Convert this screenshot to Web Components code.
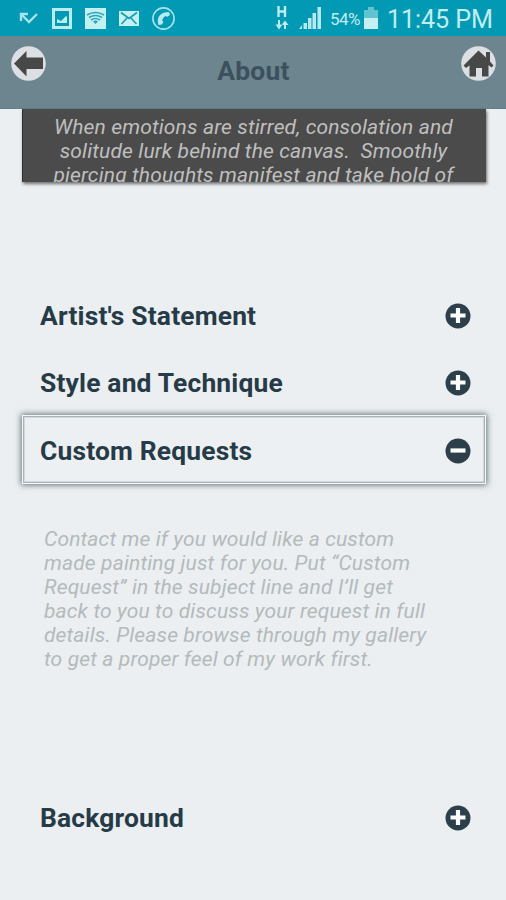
<!DOCTYPE html>
<html lang="en"><head><meta charset="utf-8"><title>About</title>
<style>body{margin:0;background:#ebeff1;font-family:Roboto,"Liberation Sans",sans-serif}</style></head>
<body><about-screen></about-screen>
<script>
const define=(name,html)=>customElements.define(name,class extends HTMLElement{
  constructor(){super();this.attachShadow({mode:'open'}).innerHTML=html;}
});

define('status-bar',`<style>
:host{display:flex;height:36px;box-sizing:border-box;background:#0199b3;color:#c0edf2;align-items:center;justify-content:space-between;padding:0 13px 0 18px}
svg{display:block}.l,.r{display:flex;align-items:center}
.l{gap:13px}.r{gap:7px}
.p{font-size:17px;line-height:36px;letter-spacing:-.5px;margin:0 -3px 0 2px;padding-top:2px}
.t{font-size:25.200px;line-height:36px;letter-spacing:-.1px;padding-top:3px;margin-left:2px}
</style>
<div class="l">
<svg width="21" height="22" viewBox="-1 0 21 22" fill="none" stroke="#a5e4ec" stroke-width="2.400"><path d="M2 14V7h7M2 7l8 8 8-8"/></svg>
<svg width="20" height="22" viewBox="0 0 20 22"><path fill="#b9edf2" fill-rule="evenodd" d="M0 1h20v21H0zM3 4v15h14V4z"/><path fill="#b9edf2" d="M5 12l4 2 5-5 1 1v6H5z"/></svg>
<svg width="21" height="22" viewBox="0 0 21 22"><path fill="#c2f0f3" d="M0 1h21v21H0z"/><g fill="none" stroke="#29a6b9" stroke-width="1.6"><path d="M2 8q8.500-5 17 0M4 10.500q6.500-4 13 0M6 13q4.500-3 9 0"/></g><path fill="#29a6b9" d="M8 14.500q2.500-2 5 0L10.500 17z"/></svg>
<svg width="20" height="22" viewBox="0 0 20 22"><path fill="#c2f0f3" d="M0 4h20v15H0z"/><path d="M2 5.500l8 6 8-6M2.500 17l5.500-6M17.500 17L12 11" fill="none" stroke="#189cb3" stroke-width="1.600"/></svg>
<svg width="23" height="23" viewBox="0 0 23 23"><circle cx="11.500" cy="11.500" r="10.600" fill="none" stroke="#a6e5ed" stroke-width="1.600"/><path d="M12.500 5.500l4.500-.5 1 3-3 2-1.200-1.200q-3 1.700-3.800 5l1.500.7-1.500 3-3.500.5C4.500 11.500 7 7 12.500 5.500z" fill="#b4eaf0"/></svg>
</div><div class="r">
<svg width="14" height="26" viewBox="0 0 14 26" fill="none" stroke="#bcebf1" stroke-width="2.400"><path d="M3.500 1v11M10 1v11M3 6.500h7"/><path d="M4 15v6M10 24v-7" stroke-width="2"/><path d="M.500 19.500l3.500 5 3.500-5zM6.500 20L10 15.500l3.500 4.500z" fill="#bcebf1" stroke="none"/></svg>
<svg style="margin-left:3px" width="22" height="22" viewBox="0 0 22 22" fill="#b7e8ef"><path d="M0 22l3-4v4zM4.500 16h3.500v6H4.500zM9 11h3.500v11H9zM13.500 6h3.500v16h-3.500zM18.500 0H22v22h-3.500z"/></svg>
<span class="p">54%</span>
<svg width="14" height="22" viewBox="0 0 14 22"><path fill="#5fc3d0" d="M4 0h6v3h4v9H0V3h4z"/><path fill="#c5eff2" d="M0 11h14v11H0z"/></svg>
<span class="t">11:45 PM</span></div>`);

customElements.define('nav-icon',class extends HTMLElement{
  connectedCallback(){
    const home=this.getAttribute('kind')==='home';
    this.attachShadow({mode:'open'}).innerHTML=`<style>:host{display:block;width:35px;height:35px}svg{display:block}</style>
    <svg width="35" height="35" viewBox="0 0 35 35"><circle cx="17.500" cy="17.500" r="17.300" fill="#dcdfe3"/>${home?
    '<path fill="#484848" d="M17.500 4.500L25 11.500V6h4v9.500l3.500 4-2 2-3-2.500v11.500H21V22h-6v8.500H8.500V19.500l-3.500 2.500-2.500-2.500z"/>':
    '<path fill="#484848" d="M3 17.500L15.500 5v6.500h16.500v11.500H15.500v7.500z"/>'}</svg>`;
  }
});

define('title-bar',`<style>
:host{display:flex;height:73px;box-sizing:border-box;background:#6c858f;justify-content:space-between;align-items:flex-start;padding:10px 10px 0 11px;border-bottom:1px solid #60808a}
h1{margin:10px 0 0;font-size:26.400px;line-height:30px;font-weight:700;color:#3c505d;letter-spacing:.3px}
</style><nav-icon kind="back"></nav-icon><h1><slot></slot></h1><nav-icon kind="home"></nav-icon>`);

define('quote-card',`<style>
:host{display:block;box-sizing:border-box;height:73px;margin:0 20px 0 22px;overflow:hidden;background:#4b4b4b;border-left:1px solid #303030;color:#bfbfbf;box-shadow:1px 2px 3px #0008;padding:6px 2px 0 0;font-size:21px;line-height:24px;font-style:italic;text-align:center;white-space:pre;letter-spacing:.14px}
</style><slot></slot>`);

customElements.define('accordion-row',class extends HTMLElement{
  connectedCallback(){
    const open=this.hasAttribute('open');
    this.attachShadow({mode:'open'}).innerHTML=`<style>
    :host{display:flex;box-sizing:border-box;height:67.500px;margin:0 20px 0 22px;padding:0 15.500px 0 18px;align-items:center;justify-content:space-between;color:#263b47}
    :host([open]){height:69px;margin-top:-2px;padding-top:3px;box-shadow:0 0 6px 1px #45555dcc,inset 0 0 0 1px #f4f6f7,inset 0 0 0 2px #a9b3b8,inset 0 0 0 3px #d2d8db;background:#ecf0f2}
    h2{margin:0;font-size:26.400px;line-height:30px;font-weight:700;letter-spacing:.18px}
    svg{display:block}</style><h2><slot></slot></h2>
    <svg width="26" height="26" viewBox="0 0 26 26"><circle cx="13" cy="13" r="12.500" fill="#2c3f4a"/><path d="M5.500 12.500h15${open?'':'M13 5v15'}" stroke="#fff" stroke-width="4.200"/></svg>`;
  }
});

define('request-note',`<style>
:host{display:block;padding:43px 0 0 44px;height:300px;box-sizing:border-box;font-size:21px;line-height:24px;font-style:italic;color:#b4babc;white-space:pre;letter-spacing:.14px}
</style><slot></slot>`);

define('about-screen',`<style>:host{display:block;height:900px;overflow:hidden;background:#ebeff1}.list{padding-top:100px}</style>
<status-bar></status-bar><title-bar>About</title-bar>
<quote-card>When emotions are stirred, consolation and
solitude lurk behind the canvas.  Smoothly
piercing thoughts manifest and take hold of</quote-card>
<div class="list"><accordion-row>Artist's Statement</accordion-row><accordion-row>Style and Technique</accordion-row><accordion-row open>Custom Requests</accordion-row>
<request-note>Contact me if you would like a custom
made painting just for you. Put “Custom
Request” in the subject line and I’ll get
back to you to discuss your request in full
details. Please browse through my gallery
to get a proper feel of my work first.</request-note>
<accordion-row>Background</accordion-row></div>`);
</script></body></html>
